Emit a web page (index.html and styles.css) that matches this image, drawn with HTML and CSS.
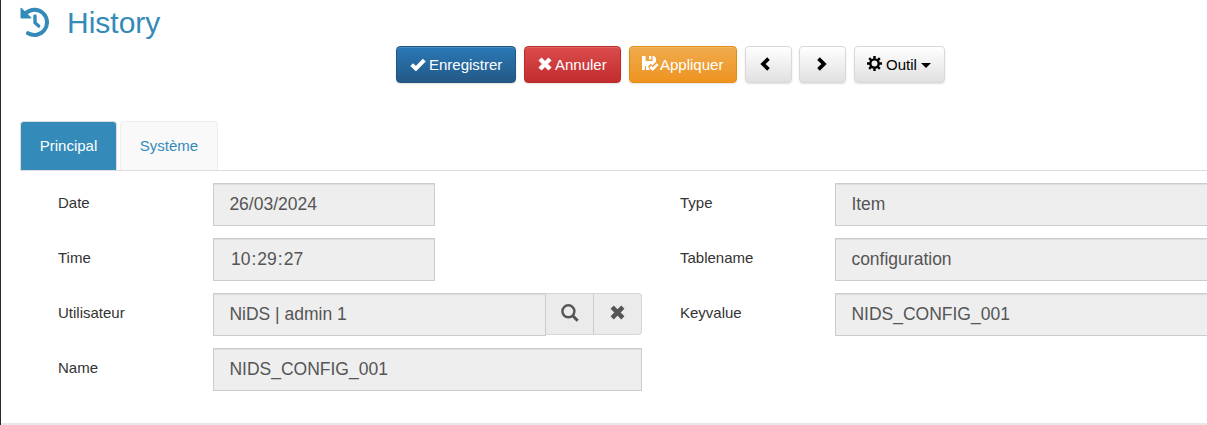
FILE: index.html
```html
<!DOCTYPE html>
<html lang="fr">
<head>
<meta charset="utf-8">
<title>History</title>
<link rel="stylesheet" href="styles.css">
</head>
<body>
<main class="page">
  <h1 class="title">
    <svg class="title-icon" viewBox="0 0 30 30"><path d="M8 26.2A12.6 12.6 0 1 0 6.2 5.8" fill="none" stroke="currentColor" stroke-width="4" stroke-linecap="round"/><path d="M.5 1.6Q.6.4 1.6 1L11 10.3q.7 1.2-.6 1.2H1.7Q.5 11.5.5 10.3z" fill="currentColor"/><path d="M15 9v6.7l3.7 3.3" fill="none" stroke="currentColor" stroke-width="3.4" stroke-linecap="round" stroke-linejoin="round"/></svg>
    <span>History</span>
  </h1>
  <div class="toolbar">
    <button class="btn save"><svg class="ico-check" viewBox="0 0 16 13"><path d="M1.7 6.6l4.2 4L14.3 2.2" fill="none" stroke="currentColor" stroke-width="4"/></svg><span>Enregistrer</span></button>
    <button class="btn cancel"><svg class="ico-x" viewBox="0 0 14 14"><path d="M2 2l10 10M12 2L2 12" stroke="currentColor" stroke-width="4.4"/></svg><span>Annuler</span></button>
    <button class="btn apply"><svg class="ico-disk" viewBox="0 0 17 15"><path fill="currentColor" fill-rule="evenodd" d="M0 0h3.6v5h7V0h1.6L14 2.2v3.6l-3.4 3.4-2.1-1.2L6 10.5l2 3.5H4v-4H3v4H0zM7 0h2.3v3.5H7z"/><path d="M8.2 10.8l2.5 2.4 5-5" fill="none" stroke="currentColor" stroke-width="2.6"/></svg><span>Appliquer</span></button>
    <button class="btn nav"><svg class="ico-chev" viewBox="0 0 10 14"><path d="M8.5 1.6L3 7l5.5 5.4" fill="none" stroke="currentColor" stroke-width="3.7"/></svg></button>
    <button class="btn nav"><svg class="ico-chev" viewBox="0 0 10 14"><path d="M1.5 1.6L7 7l-5.5 5.4" fill="none" stroke="currentColor" stroke-width="3.7"/></svg></button>
    <button class="btn tools"><svg class="ico-gear" viewBox="0 0 14 14"><circle cx="7" cy="7" r="3.9" fill="none" stroke="currentColor" stroke-width="2.2"/><path d="M7 0v3M7 11v3M0 7h3M11 7h3M2.05 2.05l2 2M9.95 9.95l2 2M11.95 2.05l-2 2M4.05 9.95l-2 2" stroke="currentColor" stroke-width="2.3"/></svg><span>Outil</span><i class="caret"></i></button>
  </div>
  <nav class="tabs">
    <a class="tab active">Principal</a>
    <a class="tab">Système</a>
  </nav>
  <div class="form">
    <section class="column">
      <div class="row"><label>Date</label><div class="field short">26/03/2024</div></div>
      <div class="row"><label>Time</label><div class="field short time">10<span class="colon">:</span>29<span class="colon">:</span>27</div></div>
      <div class="row"><label>Utilisateur</label><div class="field lookup">NiDS | admin 1</div><div class="addon"><svg class="ico-search" viewBox="0 0 18 18"><circle cx="7.4" cy="7.3" r="6" fill="none" stroke="currentColor" stroke-width="2.4"/><path d="M11.5 11.5l5.2 5.2" stroke="currentColor" stroke-width="3"/></svg></div><div class="addon last"><svg class="ico-clear" viewBox="0 0 14 14"><path d="M2 2l10 10M12 2L2 12" stroke="currentColor" stroke-width="4.2"/></svg></div></div>
      <div class="row"><label>Name</label><div class="field">NIDS_CONFIG_001</div></div>
    </section>
    <section class="column">
      <div class="row"><label>Type</label><div class="field">Item</div></div>
      <div class="row"><label>Tablename</label><div class="field">configuration</div></div>
      <div class="row"><label>Keyvalue</label><div class="field">NIDS_CONFIG_001</div></div>
    </section>
  </div>
</main>
</body>
</html>
```
FILE: styles.css
```css
* { box-sizing: border-box; }
body { margin: 0; background: #fff; font: 15px/20px "Liberation Sans", Arial, sans-serif; color: #333; overflow: hidden; }
svg { display: block; flex: none; }
.page { height: 425px; border-left: 1px solid #222d32; display: flex; flex-direction: column; overflow: hidden; }
.title { height: 46px; margin: 0; padding: 0 0 0 19px; display: flex; align-items: center; color: #348bba; font-size: 30px; line-height: 46px; font-weight: 400; }
.title-icon { width: 30px; height: 30px; margin: -2px 17px 0 0; }
.toolbar { height: 37px; display: flex; gap: 8px; margin-left: 395px; }
.btn { display: flex; align-items: center; height: 37px; padding: 0 13px; border: 1px solid; border-radius: 4px; font: 15px/20px "Liberation Sans", Arial, sans-serif; color: #fff; box-shadow: inset 0 1px 0 rgba(255,255,255,.15), 0 1px 2px rgba(0,0,0,.12); }
.save { width: 120px; background: linear-gradient(#2a78b7, #235986); border-color: #245580; }
.cancel { width: 97px; background: linear-gradient(#db4c4d, #c22c2e); border-color: #b92c28; }
.apply { width: 108px; padding-left: 12px; background: linear-gradient(#f0ab4e, #ee9320); border-color: #e38d13; }
.nav, .tools { background: linear-gradient(#fff, #e0e0e0); border-color: #d8d8d8; color: #000; }
.nav { width: 47px; padding-left: 14px; }
.nav + .nav { padding-left: 17px; margin-left: -1px; }
.tools { width: 91px; padding-left: 12px; }
.ico-check { width: 16px; height: 13px; margin: -1px 3px 0 0; }
.ico-x { width: 14px; height: 14px; margin: -2px 3px 0 0; }
.ico-disk { width: 17px; height: 15px; margin: -2px 1px 0 0; }
.ico-chev { width: 10px; height: 14px; margin-top: -1px; }
.ico-gear { width: 15px; height: 15px; margin: -2px 4px 0 0; }
.caret { border: 5px solid transparent; border-top-color: currentColor; border-bottom: 0; margin: 1px 0 0 4px; }
.tabs { height: 50px; margin: 38px 0 0 19px; border-bottom: 1px solid #ddd; display: flex; gap: 3px; }
.tab { height: 49px; width: 98px; padding-top: 14px; text-align: center; color: #348bba; background: #f9f9f9; border: 1px solid #eee; border-bottom: 0; border-radius: 4px 4px 0 0; }
.tab.active { width: 97px; color: #fff; background: #348bba; border-color: #ddd; }
.form { height: 254px; flex: none; padding-top: 12px; display: flex; border-bottom: 2px solid #e5e7eb; }
.column { width: 622px; padding-left: 57px; flex: none; }
.row { display: flex; height: 43px; width: 584px; margin-bottom: 12px; }
.row label { width: 155px; flex: none; padding-top: 10px; }
.field { flex: 1; height: 43px; padding: 0 15.4px; border: 1px solid #ccc; background: #eee; color: #555; font-size: 17.5px; line-height: 40px; box-shadow: inset 0 1px 1px rgba(0,0,0,.075); }
.short { flex: 0 0 222px; }
.time { padding-left: 17px; }
.colon { padding: 0 1px; }
.lookup { flex: 0 0 333px; }
.addon { width: 48px; height: 42px; border: 1px solid #d6d6d6; border-left: 0; background: #ebebeb; color: #555; display: flex; align-items: center; justify-content: center; }
.addon.last { border-radius: 0 4px 4px 0; }
.addon:not(.last) { border-right-color: #ccc; }
.ico-search { width: 18px; height: 18px; margin-top: -3px; }
.ico-clear { width: 15px; height: 15px; margin-top: -4px; }
```
